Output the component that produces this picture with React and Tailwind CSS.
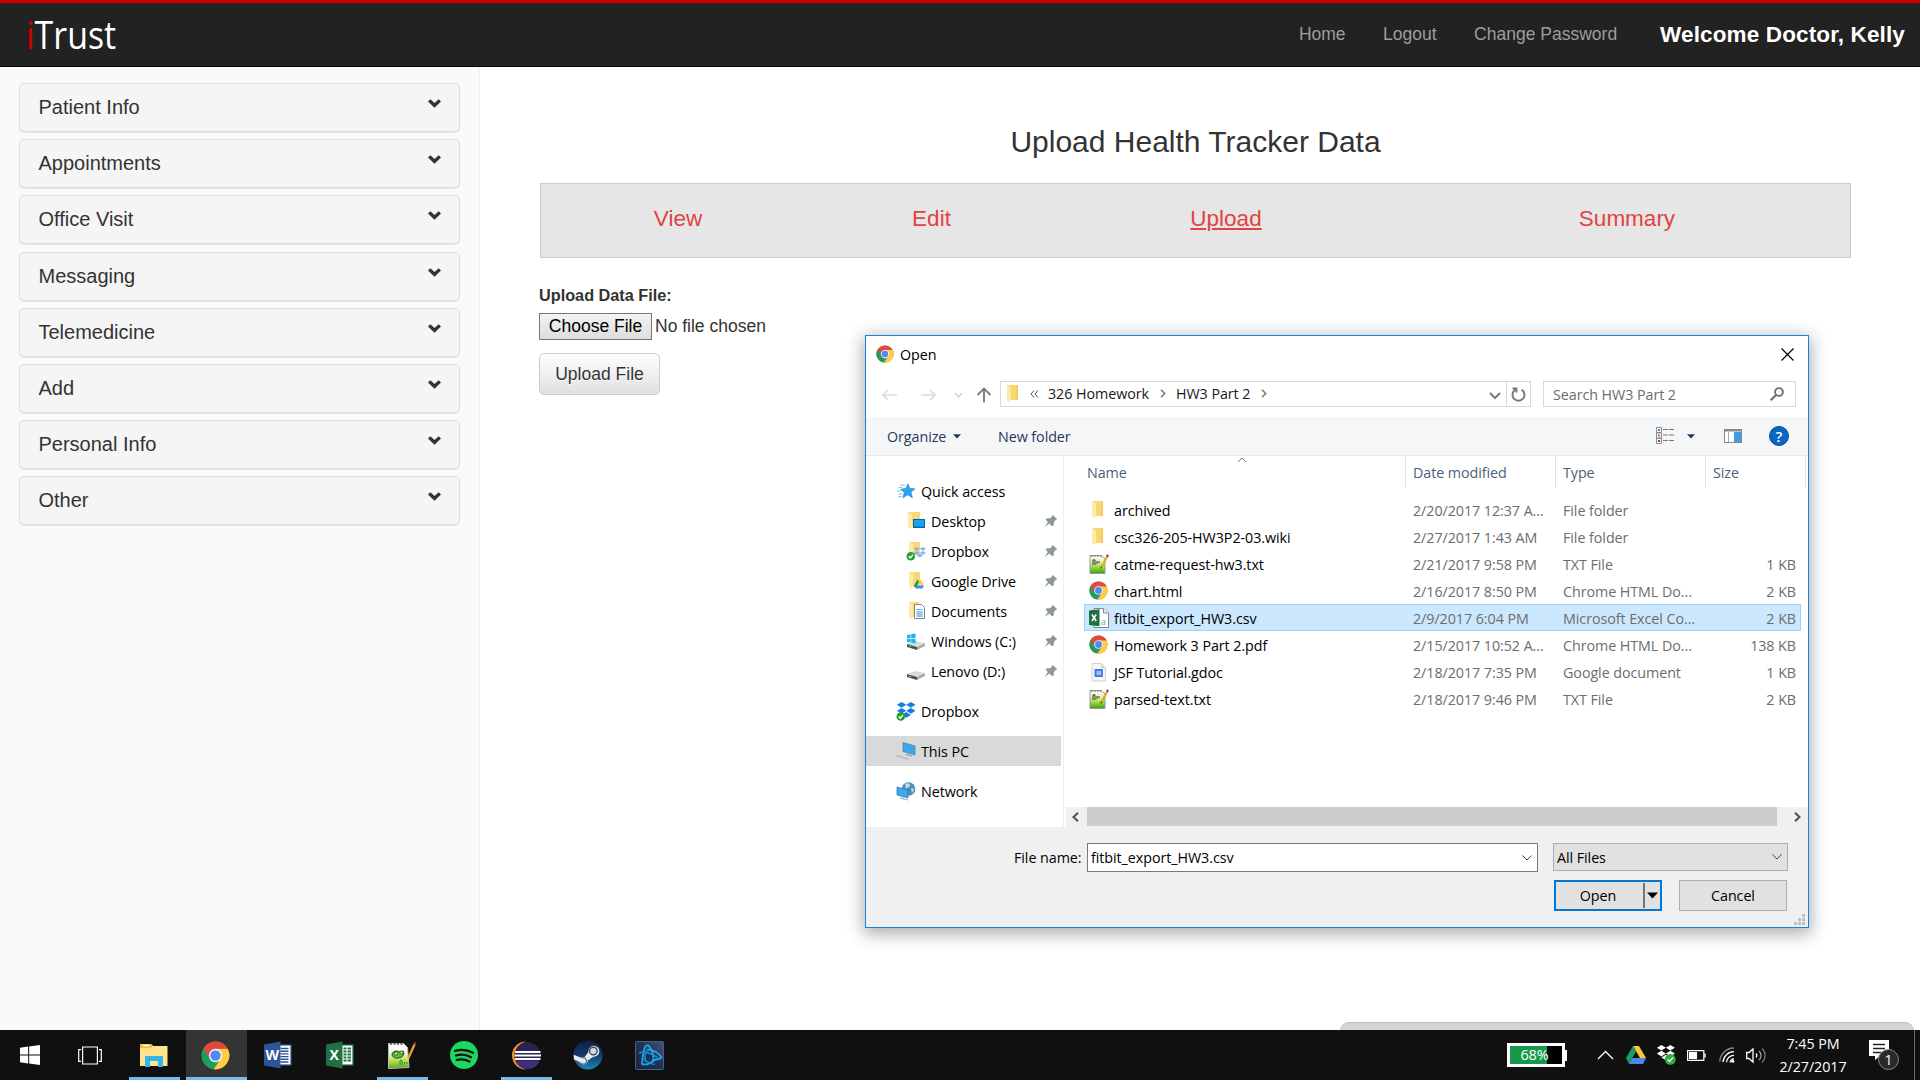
import React from "react";

const MENU = ["Patient Info", "Appointments", "Office Visit", "Messaging", "Telemedicine", "Add", "Personal Info", "Other"];

function Chrome({ className }) {
  return (
    <svg className={className} viewBox="0 0 48 48">
      <circle cx="24" cy="24" r="23" fill="#dd4b3e" />
      <path d="M4.1 12.5A23 23 0 0 0 21 46.8L32 28.6 24 24 14 29.5z" fill="#17a05e" />
      <path d="M24 13h20.2A23 23 0 0 1 21 46.8L33 29z" fill="#ffcd42" />
      <path d="M4.1 12.5A23 23 0 0 1 44.2 13H24L14.4 29.5z" fill="#dd4b3e" />
      <circle cx="24" cy="24" r="11" fill="#f4f4f4" />
      <circle cx="24" cy="24" r="8.6" fill="#4c8bf5" />
    </svg>
  );
}

function Folder({ className }) {
  return (
    <svg className={className} viewBox="0 0 18 20">
      <path d="M4 1h10v15H4z" fill="#f8d775" />
      <path d="M12.500 1H14v15h-2z" fill="#f3cb5f" />
      <path d="M3 1l4 2v13l-3 2-1-2z" fill="#ffe9a6" />
    </svg>
  );
}

function DriveMark() {
  return (
    <g>
      <path d="M7 0h6l7 12h-6z" fill="#fbc933" />
      <path d="M7 0l3 5.500L3 18l-3-6z" fill="#14a15c" />
      <path d="M6.300 12H20l-3 6H3z" fill="#4a86ee" />
    </g>
  );
}

function DropMark({ fill }) {
  return (
    <path
      fill={fill}
      d="M6 0l5 3-5 3.200L1 3zM16 0l5 3-5 3.200L11 3zM6 6.400l5 3.100-5 3.200-5-3.200zM16 6.400l5 3.100-5 3.200-5-3.200zM11 10.800l5 3.100-5 3.100-5-3.100z"
    />
  );
}

function Check({ cx, cy, r, fill = "#2a9a35" }) {
  return (
    <g>
      <circle cx={cx} cy={cy} r={r} fill={fill} />
      <path d={`M${cx - r * 0.5} ${cy}l${r * 0.35} ${r * 0.4} ${r * 0.65} ${-r * 0.75}`} fill="none" stroke="#fff" strokeWidth="1.300" />
    </g>
  );
}

function Notepad({ className }) {
  return (
    <svg className={className} viewBox="0 0 20 20">
      <defs>
        <linearGradient id="npg" x1="0" y1="0" x2="0" y2="1">
          <stop offset="0" stopColor="#fafcf4" />
          <stop offset="0.350" stopColor="#e4f3c4" />
          <stop offset="0.700" stopColor="#8ed32a" />
          <stop offset="1" stopColor="#3f9a1c" />
        </linearGradient>
      </defs>
      <path d="M1 1.500h11l4 3V19.500H1z" fill="url(#npg)" stroke="#999" strokeWidth="1" />
      <path d="M2 2h1.500M5 2h1.500M8 2h1.500M11 2h1.500" stroke="#555" />
      <path d="M4 11V6.500c0-1 2-1 2 0V11M8 7v3M10 7v2" fill="none" stroke="#3a4a2c" strokeWidth="1.100" />
      <path d="M18.300 2.200L12.600 13" stroke="#e9a826" strokeWidth="2.200" />
      <path d="M19 .8l-1 2" stroke="#8b4a4a" strokeWidth="2.200" />
      <path d="M12.800 12.500l-1 2" stroke="#444" strokeWidth="1.200" />
    </svg>
  );
}

function CsvIcon({ className }) {
  return (
    <svg className={className} viewBox="0 0 20 20">
      <path d="M5 .5h9.500l5 4.500v14.500H5z" fill="#fff" stroke="#7f8a90" />
      <path d="M14.500.5V5h5" fill="#eee" stroke="#7f8a90" />
      <path d="M0 2.500l10.500-1.200v17L0 17z" fill="#1f7145" />
      <path d="M3 6.500l4.200 6.500M7.200 6.500L3 13" stroke="#fff" strokeWidth="1.600" />
      <text x="11.800" y="16.800" fontSize="9" fill="#53b886" fontFamily="Open Sans, sans-serif">a</text>
    </svg>
  );
}

function GdocIcon({ className }) {
  return (
    <svg className={className} viewBox="0 0 20 20">
      <path d="M3 1.500h9l4.500 4V19H3z" fill="#f6f6f6" stroke="#d0d0d0" />
      <path d="M12 1.500V6h4.500" fill="#d7d7d7" />
      <rect x="5.500" y="7" width="8.500" height="8" rx="0.800" fill="#3f7ee8" />
      <path d="M7.500 10h4.800M7.500 12h4.800" stroke="#fff" />
    </svg>
  );
}

const Star = () => (
  <svg className="h-[18px] w-[19px]" viewBox="0 0 19 18">
    <path d="M11 1.800l1.800 4.600 5 .4-3.800 3.400 1.400 5.600-4.700-3-4.700 3L7.400 10.600 3.800 7.200l4.900-.8z" fill="#2aa4f4" stroke="#1678c4" strokeWidth="0.600" />
    <path d="M3 3.200h5M1.500 5.500h4M0 9h4M1.500 12h4M1 14.700h4" stroke="#6fbdf0" strokeWidth="0.900" />
  </svg>
);

const DeskIcon = () => (
  <svg className="h-5 w-5" viewBox="0 0 20 20">
    <path d="M2 1h12v15H5z" fill="#f8d775" />
    <path d="M2 1l4 2v13l-2 2-2-2z" fill="#ffe9a6" />
    <rect x="7.500" y="8.500" width="11" height="8" fill="#17a4f5" stroke="#0b62a8" />
    <path d="M9 15.500h8" stroke="#0b62a8" strokeDasharray="1.500 1.500" strokeWidth="1" />
  </svg>
);
const DropFolder = () => (
  <svg className="h-5 w-5" viewBox="0 0 20 20">
    <path d="M3 1h11v13H3z" fill="#f8d775" />
    <path d="M3 1l4 2v13l-2 1-2-2z" fill="#ffe9a6" />
    <g transform="translate(7 6) scale(.62)"><DropMark fill="#7db9ea" /></g>
    <Check cx={4.8} cy={15.3} r={4.3} />
  </svg>
);
const DriveFolder = () => (
  <svg className="h-5 w-5" viewBox="0 0 20 20">
    <path d="M3 1h11v15H3z" fill="#f8d775" />
    <path d="M3 1l4 2v13l-2 2-2-2z" fill="#ffe9a6" />
    <g transform="translate(8 8.500) scale(.5)"><DriveMark /></g>
  </svg>
);
const DocFolder = () => (
  <svg className="h-5 w-5" viewBox="0 0 20 20">
    <path d="M3 1h10v15H3z" fill="#f8d775" />
    <path d="M3 1l4 2v13l-2 2-2-2z" fill="#ffe9a6" />
    <path d="M8.500 3.500h7l3 3v11h-10z" fill="#fff" stroke="#7d8790" />
    <path d="M10.500 8.500h3M10.500 11h6.200M10.500 13h6.200M10.500 15h6.200M14.500 8.500h2" stroke="#2d8fd8" />
  </svg>
);
const Disk = ({ win }) => (
  <svg className="h-5 w-5" viewBox="0 0 20 20">
    <path d="M1 13l8-3 10 2-8 4z" fill="#d9dbdc" />
    <path d="M1 13l10 3v3L1 16z" fill="#4a4f50" />
    <path d="M11 16l8-4v3l-8 4z" fill="#a9adaf" />
    <path d="M3 15l2 .6" stroke="#6be06b" />
    {win && <path d="M1 4l3.600-.6v3.800H1zM5.200 3.300L9.500 2.600v4.600H5.200zM1 7.900h3.600v3.700L1 11zM5.200 7.900h4.300v4.500l-4.300-.7z" fill="#19b5ee" />}
  </svg>
);
const DropboxIcon = () => (
  <svg className="h-5 w-5" viewBox="0 0 20 20">
    <g transform="translate(0 1) scale(.93)"><DropMark fill="#0f7fe6" /></g>
    <Check cx={4.8} cy={15.5} r={4.3} />
  </svg>
);
const PcIcon = () => (
  <svg className="h-5 w-5" viewBox="0 0 20 20">
    <path d="M7 1.500l12 3.500v9L7 10.500z" fill="#38a6f2" stroke="#6a7d88" strokeWidth="0.800" />
    <path d="M0 15c4-1 7 3 13 2.800" fill="none" stroke="#aab4ba" strokeWidth="1.200" />
    <path d="M10 13.500l6 1.500" stroke="#8997a0" strokeWidth="1.200" />
  </svg>
);
const NetIcon = () => (
  <svg className="h-5 w-5" viewBox="0 0 20 20">
    <circle cx="12.500" cy="8" r="6.800" fill="#4c8fb8" />
    <path d="M9 3c3-2 6 0 5 2s-3 1-4 3zM15 7c2 0 3 1 3 2l-2 3z" fill="#b8dcec" />
    <path d="M1 6l11 3v8L1 14z" fill="#3aaaf5" stroke="#3b6f90" strokeWidth="0.700" />
    <path d="M4 17l8 2M8 16l-1 2" stroke="#9aa7ae" />
  </svg>
);
const Pin = () => (
  <svg className="h-[14px] w-[14px]" viewBox="0 0 14 14">
    <path d="M8.500.8l4.800 4.400-1.500.6-2 2.400v3L8 12.300 5.300 9.500.6 13l3.300-5L1.500 5.600 2.800 4.300 6 4.200l2.200-2z" fill="#8d979e" />
  </svg>
);

const PINNED = [
  ["Desktop", <DeskIcon />],
  ["Dropbox", <DropFolder />],
  ["Google Drive", <DriveFolder />],
  ["Documents", <DocFolder />],
  ["Windows (C:)", <Disk win />],
  ["Lenovo (D:)", <Disk />],
];

const fi = "h-5 w-5";
const FILES = [
  ["archived", "2/20/2017 12:37 A...", "File folder", "", <Folder className="h-5 w-[18px]" />],
  ["csc326-205-HW3P2-03.wiki", "2/27/2017 1:43 AM", "File folder", "", <Folder className="h-5 w-[18px]" />],
  ["catme-request-hw3.txt", "2/21/2017 9:58 PM", "TXT File", "1 KB", <Notepad className={fi} />],
  ["chart.html", "2/16/2017 8:50 PM", "Chrome HTML Do...", "2 KB", <Chrome className="h-[19px] w-[19px]" />],
  ["fitbit_export_HW3.csv", "2/9/2017 6:04 PM", "Microsoft Excel Co...", "2 KB", <CsvIcon className={fi} />],
  ["Homework 3 Part 2.pdf", "2/15/2017 10:52 A...", "Chrome HTML Do...", "138 KB", <Chrome className="h-[19px] w-[19px]" />],
  ["JSF Tutorial.gdoc", "2/18/2017 7:35 PM", "Google document", "1 KB", <GdocIcon className={fi} />],
  ["parsed-text.txt", "2/18/2017 9:46 PM", "TXT File", "2 KB", <Notepad className={fi} />],
];

function Dialog() {
  return (
    <div className="absolute left-[865px] top-[335px] flex h-[593px] w-[944px] flex-col border border-[#1883d7] bg-white font-['Open_Sans',sans-serif] text-[14.300px] leading-5 tracking-[-0.060px] text-black shadow-[0_4px_16px_2px_rgba(0,0,0,0.32)]">
      <div className="flex h-[36px] items-center pl-[10px] pr-[14px]">
        <Chrome className="h-[18px] w-[18px]" />
        <span className="ml-[6px] pt-px">Open</span>
        <svg className="ml-auto h-[13px] w-[13px]" viewBox="0 0 13 13"><path d="M.5.5l12 12M12.500.5l-12 12" stroke="#000" strokeWidth="1.200" /></svg>
      </div>
      <div className="flex h-[45px] items-center pb-px pr-[12px]">
        <svg className="ml-[16px] mt-[2px] h-4 w-[110px]" viewBox="0 0 110 16" fill="none">
          <path d="M15 8H1M6 3L1 8l5 5M39 8h14M48 3l5 5-5 5" stroke="#dcdcdc" strokeWidth="1.700" />
          <path d="M73 6l3.500 4L80 6" stroke="#d4d4d4" strokeWidth="1.500" />
          <path d="M102 15.500V2M95.500 8L102 1.500 108.500 8" stroke="#7c7c7c" strokeWidth="1.900" />
        </svg>
        <div className="ml-[8px] flex h-[26px] w-[531px] items-center border border-[#d9d9d9] text-[#1a1a1a]">
          <Folder className="ml-[3px] h-[20px] w-[18px]" />
          <svg className="ml-[8px] h-[8px] w-[9px]" viewBox="0 0 9 8" fill="none"><path d="M4 .5L1 4l3 3.500M8 .5L5 4l3 3.500" stroke="#555" /></svg>
          <span className="ml-[9px] w-[102px] whitespace-nowrap">326 Homework</span>
          <svg className="mb-[2px] ml-[10px] h-[9px] w-[6px]" viewBox="0 0 6 9" fill="none"><path d="M1 .8l3.700 3.700L1 8.200" stroke="#777" strokeWidth="1.500" /></svg>
          <span className="ml-[10px] w-[75px] whitespace-nowrap">HW3 Part 2</span>
          <svg className="mb-[2px] ml-[10px] h-[9px] w-[6px]" viewBox="0 0 6 9" fill="none"><path d="M1 .8l3.700 3.700L1 8.200" stroke="#777" strokeWidth="1.500" /></svg>
          <svg className="ml-auto mr-[5px] mt-[3px] h-[8px] w-[12px]" viewBox="0 0 12 8" fill="none"><path d="M1 1l5 5 5-5" stroke="#7a7a7a" strokeWidth="2" /></svg>
          <div className="flex h-full w-[24px] items-center justify-center border-l border-[#d9d9d9]">
            <svg className="h-[15px] w-[15px]" viewBox="0 0 15 15" fill="none"><path d="M4.500 2.600A6 6 0 1 0 10.500 2.600M1.500 1.500h4v4" stroke="#7a7a7a" strokeWidth="1.900" /></svg>
          </div>
        </div>
        <div className="ml-auto flex h-[26px] w-[253px] items-center border border-[#d9d9d9] pl-[9px] pr-[11px] text-[#6d6d6d]">
          <span className="pt-px">Search HW3 Part 2</span>
          <svg className="ml-auto h-[14px] w-[14px]" viewBox="0 0 14 14" fill="none"><circle cx="9" cy="5" r="3.900" stroke="#6d6d6d" strokeWidth="1.900" /><path d="M6 8l-5.300 5.300" stroke="#6d6d6d" strokeWidth="2" /></svg>
        </div>
      </div>
      <div className="flex h-[39px] shrink-0 items-center border-b border-[#e6e8ea] bg-[#f5f6f7] pl-[21px] pr-[19px] text-[#1e395b]">
        <span className="w-[61px] pt-px">Organize</span>
        <svg className="ml-[5px] h-[5px] w-[8px]" viewBox="0 0 8 5"><path d="M0 .3h8L4 4.500z" fill="#1e395b" /></svg>
        <span className="ml-[37px] pt-px">New folder</span>
        <svg className="ml-auto h-[18px] w-[18px]" viewBox="0 0 18 18" fill="none">
          <path d="M.5.500h5v5h-5zM.5 6h5v5h-5zM.5 11.500h5v5h-5z" stroke="#8b8b8b" fill="#fff" />
          <path d="M2 3h2" stroke="#3a7dc8" strokeWidth="2" /><path d="M2 8.500h2" stroke="#a8713a" strokeWidth="2" /><path d="M2 14h2" stroke="#c02020" strokeWidth="2" />
          <path d="M7 2.500h5M13 2.500h5M7 8h5M13 8h5M7 13.500h5M13 13.500h5" stroke="#777" />
        </svg>
        <svg className="ml-[13px] h-[5px] w-[8px]" viewBox="0 0 8 5"><path d="M0 .3h8L4 4.500z" fill="#1e395b" /></svg>
        <svg className="ml-[29px] h-[14px] w-[18px]" viewBox="0 0 18 14"><rect x="0.500" y="0.500" width="17" height="13" fill="#fff" stroke="#858585" /><path d="M1 1h16v1.500H1z" fill="#8b8b8b" /><path d="M4.500 3v10" stroke="#aaa" /><path d="M10 3h7v10h-7z" fill="#3f9be4" /></svg>
        <div className="ml-[27px] flex h-5 w-5 items-center justify-center rounded-full border border-[#0a4a96] bg-[#0866c6] text-[15px] font-semibold text-white">?</div>
      </div>
      <div className="flex h-[371px] shrink-0">
        <div className="w-[198px] shrink-0 border-r border-[#f0f0f0] pr-[2px] pt-[20px]">
          <div className="flex h-[30px] items-center pl-[31px]"><Star /><span className="ml-[5px] pt-[2px]">Quick access</span></div>
          {PINNED.map(([name, icon]) => (
            <div key={name} className="flex h-[30px] items-center pl-[40px] pr-[3px]">
              {icon}
              <span className="ml-[5px] pt-[2px]">{name}</span>
              <span className="ml-auto"><Pin /></span>
            </div>
          ))}
          <div className="mt-[10px] flex h-[30px] items-center pl-[30px]"><DropboxIcon /><span className="ml-[5px] pt-[2px]">Dropbox</span></div>
          <div className="mt-[10px] flex h-[30px] items-center bg-[#d9d9d9] pl-[30px]"><PcIcon /><span className="ml-[5px] pt-[2px]">This PC</span></div>
          <div className="mt-[10px] flex h-[30px] items-center pl-[30px]"><NetIcon /><span className="ml-[5px] pt-[2px]">Network</span></div>
        </div>
        <div className="flex min-w-0 flex-1 flex-col">
          <div className="ml-[20px] flex h-[32px] items-center text-[#4c607a]">
            <div className="flex h-full w-[322px] items-center border-r border-[#e5e5e5] pl-[3px] pt-[2px]">
              <span className="w-[41px]">Name</span>
              <svg className="-mt-px mb-auto ml-[109px] h-[6px] w-[10px]" viewBox="0 0 10 6" fill="none"><path d="M.8 5L5 1l4.200 4" stroke="#777" /></svg>
            </div>
            <div className="flex h-full w-[150px] items-center border-r border-[#e5e5e5] pl-[7px] pt-[2px]">Date modified</div>
            <div className="flex h-full w-[150px] items-center border-r border-[#e5e5e5] pl-[7px] pt-[2px]">Type</div>
            <div className="flex h-full w-[100px] items-center border-r border-[#e5e5e5] pl-[7px] pt-[2px]">Size</div>
          </div>
          <div className="ml-[20px] mt-[8px] w-[717px]">
            {FILES.map(([name, date, type, size, icon], i) => (
              <div key={name} className={"flex h-[27px] items-center whitespace-nowrap text-[#6d6d6d] " + (i === 4 ? "bg-[#cce8ff] outline outline-1 -outline-offset-1 outline-[#99d1ff]" : "")}>
                <span className="flex w-[30px] items-center pl-[5px]">{icon}</span>
                <span className="w-[299px] pt-[3px] text-black">{name}</span>
                <span className="w-[150px] pt-[3px]">{date}</span>
                <span className="w-[150px] pt-[3px]">{type}</span>
                <span className="ml-auto pr-[5px] pt-[3px]">{size}</span>
              </div>
            ))}
          </div>
          <div className="ml-[2px] mt-auto flex h-[20px] items-center bg-[#f0f0f0]">
            <svg className="ml-[6px] h-[10px] w-[7px]" viewBox="0 0 7 10" fill="none"><path d="M6 .7L1.500 5 6 9.300" stroke="#505050" strokeWidth="2" /></svg>
            <div className="mb-px ml-[8px] h-[19px] w-[690px] bg-[#cdcdcd]" />
            <svg className="ml-[17px] h-[10px] w-[7px]" viewBox="0 0 7 10" fill="none"><path d="M1 .7L5.500 5 1 9.300" stroke="#505050" strokeWidth="2" /></svg>
          </div>
        </div>
      </div>
      <div className="relative flex-1 bg-[#f0f0f0] pl-[148px] pt-[16px]">
        <div className="flex">
          <span className="flex h-[29px] w-[73px] items-center whitespace-nowrap">File name:</span>
          <div className="flex h-[29px] w-[451px] items-center border border-[#7a7a7a] bg-white pl-[3px] pr-[5px]">
            fitbit_export_HW3.csv
            <svg className="ml-auto h-[6px] w-[10px]" viewBox="0 0 10 6" fill="none"><path d="M.5.5L5 5 9.500.5" stroke="#444" /></svg>
          </div>
          <div className="ml-[15px] flex h-[28px] w-[235px] items-center border border-[#adadad] bg-[#e1e1e1] pl-[3px] pr-[5px]">
            <span className="pt-[2px]">All Files</span>
            <svg className="ml-auto h-[6px] w-[10px]" viewBox="0 0 10 6" fill="none"><path d="M.5.5L5 5 9.500.5" stroke="#444" /></svg>
          </div>
        </div>
        <div className="ml-[540px] mt-[8px] flex">
          <div className="flex h-[31px] w-[108px] items-center border-2 border-[#0078d7] bg-[#e1e1e1]">
            <span className="w-[87px] pr-[3px] text-center">Open</span>
            <span className="h-[25px] w-[2px] bg-[#757575]" />
            <svg className="ml-[2px] h-[7px] w-[11px]" viewBox="0 0 11 7"><path d="M0 .5h11L5.500 6.500z" fill="#000" /></svg>
          </div>
          <div className="ml-[17px] flex h-[31px] w-[108px] items-center justify-center border border-[#adadad] bg-[#e1e1e1]">Cancel</div>
        </div>
        <svg className="absolute bottom-[2px] right-[3px] h-[11px] w-[11px]" viewBox="0 0 11 11"><path d="M8 0h3v3H8zM4 4h3v3H4zM8 4h3v3H8zM0 8h3v3H0zM4 8h3v3H4zM8 8h3v3H8z" fill="#bfbfbf" /></svg>
      </div>
    </div>
  );
}

function OfficeIcon({ dark, light, letter }) {
  return (
    <svg className="h-7 w-7" viewBox="0 0 28 28">
      <rect x="14" y="4" width="13" height="20" fill="#fff" stroke={light} strokeWidth="1.200" />
      {letter === "W" ? (
        <path d="M16.500 7.500h8M16.500 10.200h8M16.500 12.900h8M16.500 15.600h8M16.500 18.300h8M16.500 21h8" stroke={light} strokeWidth="1.400" />
      ) : (
        <path d="M17.500 6.500h3v2h-3zM21.500 6.500h3.500v2h-3.500zM17.500 9.500h3v2h-3zM21.500 9.500h3.500v2h-3.500zM17.500 12.500h3v2h-3zM21.500 12.500h3.500v2h-3.500zM17.500 15.500h3v2h-3zM21.500 15.500h3.500v2h-3.500zM17.500 18.500h3v2h-3zM21.500 18.500h3.500v2h-3.500z" fill={light} />
      )}
      <path d="M0 3.500L16.500.5v27L0 24.500z" fill={dark} />
      <text x="8.200" y="19" textAnchor="middle" fontSize="14" fontWeight="700" fill="#fff" fontFamily="Open Sans, sans-serif">{letter}</text>
    </svg>
  );
}

function Slot({ children, className = "" }) {
  return <div className={"flex h-full shrink-0 items-center justify-center " + className}>{children}</div>;
}

function Taskbar() {
  return (
    <div className="relative flex h-[50px] shrink-0 items-center bg-[#101010] font-['Open_Sans',sans-serif] text-white">
      <Slot className="w-[60px]">
        <svg className="h-5 w-5" viewBox="0 0 20 20"><path d="M0 2.800l8.200-1.200v7.900H0zM9.200 1.400L20 0v9.500H9.200zM0 10.500h8.200v7.900L0 17.200zM9.200 10.500H20V20L9.200 18.600z" fill="#fff" /></svg>
      </Slot>
      <Slot className="w-[60px]">
        <svg className="h-[19px] w-6" viewBox="0 0 24 19" fill="none" stroke="#fff" strokeWidth="1.200"><path d="M4.600 1h14.800v17H4.600zM3 3.600H.7v11.800H3M21 3.600h2.300v11.800H21" /></svg>
      </Slot>
      <Slot className="ml-[9px] w-[51px] border-b-[3px] border-[#76b9ed] pr-px pt-[3px]">
        <svg className="h-6 w-7" viewBox="0 0 28 24"><path d="M0 1h11l2 2h14.500v20H0z" fill="#ffe38f" /><path d="M0 1h11l2 2-2 2H0z" fill="#f5c02c" /><path d="M3 2.500h6" stroke="#fff" strokeWidth="1.500" /><path d="M5 13h18v11h-5v-6h-8v6H5z" fill="#35b5ea" /></svg>
      </Slot>
      <Slot className="ml-[6px] w-[61px] border-b-[3px] border-[#76b9ed] bg-[#343434] pr-[2px] pt-[3px]"><Chrome className="h-[29px] w-[29px]" /></Slot>
      <Slot className="w-[61px]"><OfficeIcon dark="#2a5699" light="#2a5699" letter="W" /></Slot>
      <Slot className="w-[63px]"><OfficeIcon dark="#1f7145" light="#1f7145" letter="X" /></Slot>
      <Slot className="ml-[6px] w-[51px] border-b-[3px] border-[#76b9ed] pr-[2px] pt-[3px]">
        <svg className="h-[29px] w-[29px]" viewBox="0 0 29 29">
          <defs><linearGradient id="npb" x1="0" y1="0" x2="0" y2="1"><stop offset="0.300" stopColor="#fbfbf6" /><stop offset="0.700" stopColor="#b9df4c" /><stop offset="1" stopColor="#51a81e" /></linearGradient></defs>
          <path d="M1.500 2.500h15l4 4 1.500 20-20.500 1z" fill="url(#npb)" stroke="#bbb" />
          <path d="M3 3h2M6.500 3h2M10 3h2M13.500 3h2" stroke="#555" strokeWidth="1.500" />
          <path d="M5 13c1-3 5-4 7-2l4-1c2 2.500 0 6-3 6.500-4 1.500-8 0-8-3.500z" fill="#5fbf35" stroke="#1d4d14" strokeWidth="1" />
          <circle cx="9" cy="12.500" r="1.700" fill="#cfeab0" stroke="#1d4d14" strokeWidth="0.800" />
          <circle cx="14.500" cy="11.500" r="1.500" fill="#cfeab0" stroke="#1d4d14" strokeWidth="0.800" />
          <path d="M13 24v-4c0-1.500 2-1.500 2 0v4M17.500 21v2M20 21v2" fill="none" stroke="#284" />
          <path d="M27.500 3.500L21.500 17" stroke="#eaa52b" strokeWidth="2.200" /><path d="M28.300 1.500l-1 2.300" stroke="#a53c3c" strokeWidth="2.200" /><path d="M21.500 17l-1 2.300" stroke="#ddd" strokeWidth="1.300" />
        </svg>
      </Slot>
      <Slot className="ml-[5px] w-[62px]">
        <svg className="h-7 w-7" viewBox="0 0 28 28"><circle cx="14" cy="14" r="14" fill="#1ed760" /><path d="M5 9.800c6-1.700 12.500-1.100 18 1.900M6 14.500c5-1.400 10.500-.8 15 1.700M6.800 18.900c4.400-1 8.700-.5 12.600 1.600" fill="none" stroke="#101010" strokeWidth="2.300" strokeLinecap="round" /></svg>
      </Slot>
      <Slot className="ml-[6px] w-[51px] border-b-[3px] border-[#76b9ed] pr-[2px] pt-[3px]">
        <svg className="h-[29px] w-[30px]" viewBox="0 0 30 29">
          <path d="M15 .5A14 14 0 0 0 15 28.500 15 14.500 0 0 1 15 .5z" fill="#f7941e" />
          <circle cx="16.500" cy="14.500" r="13.200" fill="#2c2255" />
          <path d="M4.500 20h24a13 13 0 0 1-24 0z" fill="#3d3078" />
          <path d="M4 11h25.500M3.500 14.500H30M4 18h25.500" stroke="#fff" strokeWidth="1.900" />
        </svg>
      </Slot>
      <Slot className="ml-[6px] w-[60px]">
        <svg className="h-[30px] w-[30px]" viewBox="0 0 30 30">
          <defs><linearGradient id="stm" x1="0" y1="0" x2="0" y2="1"><stop offset="0" stopColor="#0f1f40" /><stop offset="0.500" stopColor="#143a68" /><stop offset="1" stopColor="#1789c0" /></linearGradient></defs>
          <circle cx="15" cy="15" r="14.500" fill="url(#stm)" />
          <path d="M.6 14.800l7.500 3 3.500-.6 3.800-5.300A5.500 5.500 0 1 1 20.300 16.700L14.800 20.500A4.300 4.300 0 0 1 6.600 22L1 19.500z" fill="#e8ebee" />
          <circle cx="20.300" cy="11" r="3.800" fill="#d5dae0" stroke="#3c4a5c" strokeWidth="1.400" />
          <path d="M8 22.500a3 3 0 1 0 1.500-4.300" fill="none" stroke="#5a7190" strokeWidth="1.200" />
        </svg>
      </Slot>
      <Slot className="ml-px w-[60px]">
        <svg className="h-[29px] w-[29px]" viewBox="0 0 29 29" fill="none">
          <defs><linearGradient id="bng" x1="1" y1="0" x2="0" y2="1"><stop offset="0" stopColor="#415680" /><stop offset="0.500" stopColor="#1f3050" /><stop offset="1" stopColor="#1b2744" /></linearGradient></defs>
          <rect x="0.500" y="0.500" width="28" height="28" rx="1" fill="url(#bng)" stroke="#4b5f86" />
          <path d="M7 23C8 14 8.500 6 11.500 4.500c3-1 6 5 7 12.500M6.500 23c5 1.500 9-.5 13-4M12 9c6-1 12 3 14.500 7.500-2 2-6 2.500-9.500 2" stroke="#1ba9ec" strokeWidth="1.800" />
          <path d="M10.500 21c-1-6 0-11 3-13.500M9 18c3 3 7 5 11 5.500M4 12c3-1 7-1 9 0 4 1 8 3 10 6" stroke="#168ed6" strokeWidth="1.500" />
        </svg>
      </Slot>

      <div className="ml-auto flex items-center">
        <div className="mr-[30px] flex items-center">
          <div className="relative h-6 w-[58px] border-[3px] border-white bg-black">
            <div className="h-full w-[37px] bg-[#16994a]" />
            <span className="absolute inset-0 pr-[3px] text-center text-[14.500px] leading-[18px] tracking-[-0.200px]">68%</span>
          </div>
          <div className="h-[11px] w-[2px] bg-white" />
        </div>
        <svg className="h-[10px] w-[17px]" viewBox="0 0 17 10" fill="none"><path d="M1 9l7.500-7.500L16 9" stroke="#fff" strokeWidth="1.300" /></svg>
        <svg className="ml-[12px] h-[18px] w-5" viewBox="0 0 20 18"><DriveMark /></svg>
        <svg className="ml-[10px] h-5 w-5" viewBox="0 0 20 20"><g transform="scale(.9)"><DropMark fill="#fff" /></g><Check cx={14.3} cy={14.4} r={5.4} fill="#2eae3c" /></svg>
        <svg className="ml-[11px] h-[11px] w-[19px]" viewBox="0 0 19 11" fill="none"><path d="M.6.600h16.200v9.800H.6z" stroke="#fff" strokeWidth="1.200" /><path d="M2 2h8v7H2z" fill="#fff" /><path d="M18 3.500v4" stroke="#fff" strokeWidth="1.400" /></svg>
        <svg className="ml-[13px] h-4 w-4" viewBox="0 0 16 16" fill="none">
          <path d="M.8 14.500A14 14 0 0 1 14.800 1" stroke="#888" strokeWidth="1.300" />
          <path d="M4 15A11 11 0 0 1 15 4.700M7.500 15.300A7.600 7.600 0 0 1 15 8.300M11 15.500a4.300 4.300 0 0 1 4-3.600" stroke="#fff" strokeWidth="1.300" />
          <circle cx="13.800" cy="14.300" r="1.500" fill="#fff" />
        </svg>
        <svg className="ml-[11px] h-[17px] w-[21px]" viewBox="0 0 21 17" fill="none"><path d="M.7 5.500H3L7 2v13l-4-3.500H.7z" stroke="#fff" strokeWidth="1.300" /><path d="M10 6.500a3 3 0 0 1 0 4" stroke="#fff" strokeWidth="1.200" /><path d="M13 4a6 6 0 0 1 0 9" stroke="#aaa" strokeWidth="1.200" /><path d="M16 1.500a9.500 9.500 0 0 1 0 14" stroke="#777" strokeWidth="1.200" /></svg>
        <div className="ml-[9px] w-[74px] whitespace-nowrap text-center text-[14.300px] leading-[23px] tracking-[-0.060px]">
          <div>7:45 PM</div>
          <div>2/27/2017</div>
        </div>
        <div className="relative ml-[19px] h-[30px] w-[31px]">
          <svg className="h-5 w-5" viewBox="0 0 20 20"><path d="M0 0h20v16h-9l-5 4v-4H0z" fill="#fff" /><path d="M4 4.500h12M4 8.500h12M4 12.500h8" stroke="#222" strokeWidth="1.300" /></svg>
          <div className="absolute left-[9px] top-[9px] flex h-[21px] w-[21px] items-center justify-center rounded-full border border-[#888] bg-[#2a2a2a] text-[14px] leading-none">1</div>
        </div>
        <div className="ml-[14px] h-[50px] w-[6px] border-l border-[#6a6a6a]" />
      </div>
    </div>
  );
}

export default function App() {
  return (
    <div className="relative flex h-[1080px] w-[1920px] flex-col overflow-hidden bg-white font-['Liberation_Sans',sans-serif] text-[#333]">
      <header className="flex h-[67px] shrink-0 items-center border-b border-t-[3px] border-b-[#080808] border-t-[#cc0000] bg-[#222] pl-[26px] pr-[15px]">
        <div className="origin-left scale-x-[0.87] pb-[3px] font-['Open_Sans',sans-serif] text-[39px] font-medium leading-none text-white"><span className="text-[#cc0000]">i</span>Trust</div>
        <nav className="ml-auto flex items-center text-[17.500px] text-[#9d9d9d]">
          <span>Home</span>
          <span className="ml-[37.500px]">Logout</span>
          <span className="ml-[37.500px]">Change Password</span>
        </nav>
        <div className="ml-[43px] text-[22.500px] font-bold tracking-[0.130px] text-white">Welcome Doctor, Kelly</div>
      </header>

      <div className="flex min-h-0 flex-1">
        <aside className="flex w-[480px] shrink-0 flex-col gap-[7.200px] border-r border-[#eee] bg-[#fafafa] pl-[19px] pr-[19px] pt-[16px]">
          {MENU.map((m) => (
            <div key={m} className="flex h-[49px] shrink-0 justify-between rounded-[5px] border border-[#ddd] bg-[#f5f5f5] pl-[18.500px] pr-[18px] pt-[12px] shadow-[0_1px_1px_rgba(0,0,0,0.08)]">
              <span className="text-[20px] leading-[22px]">{m}</span>
              <svg className="mt-[3px] h-[9px] w-[13px]" viewBox="0 0 13 9"><path d="M0 2.500L2.300.3l4.200 3.800L10.700.3 13 2.500 6.500 8.800z" fill="#333" /></svg>
            </div>
          ))}
        </aside>
        <main className="min-w-0 flex-1 pl-[60px] pr-[69px] pt-[58px]">
          <h1 className="text-center text-[30px] leading-[33px]">Upload Health Tracker Data</h1>
          <div className="mt-[25px] grid h-[75px] grid-cols-[274px_233px_356px_1fr] border border-[#ccc] bg-[#e6e6e6] pt-[21px] text-center text-[22.500px] leading-[28px] text-[#e04343]">
            <span>View</span>
            <span>Edit</span>
            <span className="underline">Upload</span>
            <span>Summary</span>
          </div>
          <div className="-ml-px mt-[27px] text-[16.250px] font-bold leading-5">Upload Data File:</div>
          <div className="-ml-px mt-[8px] flex items-center text-[17.500px] leading-5">
            <span className="flex h-[27px] w-[113px] items-center justify-center border border-[#767676] bg-gradient-to-b from-[#f4f4f4] to-[#dddddd] pb-[2px] text-black">Choose File</span>
            <span className="ml-[3px] pb-[2px]">No file chosen</span>
          </div>
          <div className="-ml-px mt-[13px] flex h-[42px] w-[121px] items-center justify-center rounded-[5px] border border-[#ccc] bg-gradient-to-b from-white to-[#e0e0e0] text-[17.500px] [text-shadow:0_1px_0_#fff]">Upload File</div>
        </main>
      </div>

      <div className="absolute left-[1340px] top-[1022px] h-[20px] w-[574px] rounded-t-[9px] border border-[#bdbdbd] bg-[#d4d4d4]" />
      <Taskbar />
      <Dialog />
    </div>
  );
}
